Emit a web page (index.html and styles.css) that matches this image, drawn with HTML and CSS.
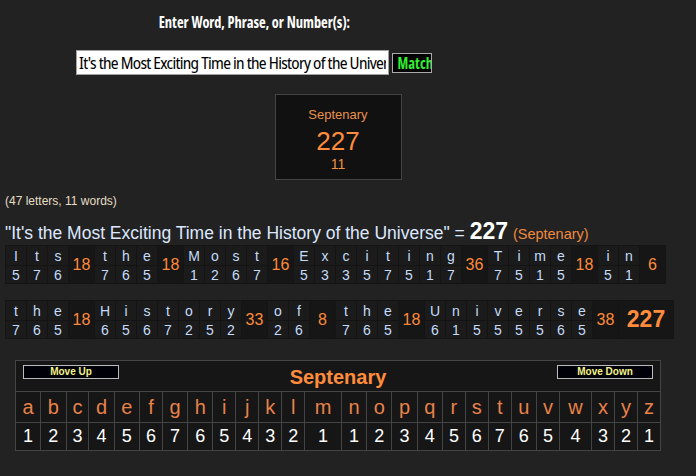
FILE: index.html
```html
<!DOCTYPE html>
<html>
<head>
<meta charset="utf-8">
<link rel="stylesheet" href="styles.css">
</head>
<body>
<div class="page">
  <div class="search">
    <div class="prompt"><span class="squeeze">Enter Word, Phrase, or Number(s):</span></div>
    <form class="search-row">
      <input class="search-input" type="text" value="It's the Most Exciting Time in the History of the Universe">
      <button class="match-btn" type="button"><span class="squeeze">Match</span></button>
    </form>
  </div>

  <div class="result-box">
    <div class="rb-name">Septenary</div>
    <div class="rb-value">227</div>
    <div class="rb-words">11</div>
  </div>

  <div class="counts">(47 letters, 11 words)</div>
  <div class="phrase">"It's the Most Exciting Time in the History of the Universe" = <b class="phrase-total">227</b> <span class="phrase-cipher">(Septenary)</span></div>

  <table class="breakdown">
    <tr>
      <td class="l">I</td><td class="l">t</td><td class="l">s</td><td class="s" rowspan="2">18</td>
      <td class="l">t</td><td class="l">h</td><td class="l">e</td><td class="s" rowspan="2">18</td>
      <td class="l">M</td><td class="l">o</td><td class="l">s</td><td class="l">t</td><td class="s" rowspan="2">16</td>
      <td class="l">E</td><td class="l">x</td><td class="l">c</td><td class="l">i</td><td class="l">t</td><td class="l">i</td><td class="l">n</td><td class="l">g</td><td class="s" rowspan="2">36</td>
      <td class="l">T</td><td class="l">i</td><td class="l">m</td><td class="l">e</td><td class="s" rowspan="2">18</td>
      <td class="l">i</td><td class="l">n</td><td class="s" rowspan="2">6</td>
    </tr>
    <tr>
      <td class="d">5</td><td class="d">7</td><td class="d">6</td>
      <td class="d">7</td><td class="d">6</td><td class="d">5</td>
      <td class="d">1</td><td class="d">2</td><td class="d">6</td><td class="d">7</td>
      <td class="d">5</td><td class="d">3</td><td class="d">3</td><td class="d">5</td><td class="d">7</td><td class="d">5</td><td class="d">1</td><td class="d">7</td>
      <td class="d">7</td><td class="d">5</td><td class="d">1</td><td class="d">5</td>
      <td class="d">5</td><td class="d">1</td>
    </tr>
  </table>

  <table class="breakdown">
    <tr>
      <td class="l">t</td><td class="l">h</td><td class="l">e</td><td class="s" rowspan="2">18</td>
      <td class="l">H</td><td class="l">i</td><td class="l">s</td><td class="l">t</td><td class="l">o</td><td class="l">r</td><td class="l">y</td><td class="s" rowspan="2">33</td>
      <td class="l">o</td><td class="l">f</td><td class="s" rowspan="2">8</td>
      <td class="l">t</td><td class="l">h</td><td class="l">e</td><td class="s" rowspan="2">18</td>
      <td class="l">U</td><td class="l">n</td><td class="l">i</td><td class="l">v</td><td class="l">e</td><td class="l">r</td><td class="l">s</td><td class="l">e</td><td class="s" rowspan="2">38</td>
      <td class="total" rowspan="2">227</td>
    </tr>
    <tr>
      <td class="d">7</td><td class="d">6</td><td class="d">5</td>
      <td class="d">6</td><td class="d">5</td><td class="d">6</td><td class="d">7</td><td class="d">2</td><td class="d">5</td><td class="d">2</td>
      <td class="d">2</td><td class="d">6</td>
      <td class="d">7</td><td class="d">6</td><td class="d">5</td>
      <td class="d">6</td><td class="d">1</td><td class="d">5</td><td class="d">5</td><td class="d">5</td><td class="d">5</td><td class="d">6</td><td class="d">5</td>
    </tr>
  </table>

  <table class="cipher">
    <tr>
      <td class="cipher-head-cell" colspan="26">
        <div class="cipher-head">
          <button class="move-btn" type="button">Move Up</button>
          <span class="cipher-title">Septenary</span>
          <button class="move-btn" type="button">Move Down</button>
        </div>
      </td>
    </tr>
    <tr class="cipher-letters">
      <td>a</td><td>b</td><td>c</td><td>d</td><td>e</td><td>f</td><td>g</td><td>h</td><td>i</td><td>j</td><td>k</td><td>l</td><td>m</td><td>n</td><td>o</td><td>p</td><td>q</td><td>r</td><td>s</td><td>t</td><td>u</td><td>v</td><td>w</td><td>x</td><td>y</td><td>z</td>
    </tr>
    <tr class="cipher-values">
      <td>1</td><td>2</td><td>3</td><td>4</td><td>5</td><td>6</td><td>7</td><td>6</td><td>5</td><td>4</td><td>3</td><td>2</td><td>1</td><td>1</td><td>2</td><td>3</td><td>4</td><td>5</td><td>6</td><td>7</td><td>6</td><td>5</td><td>4</td><td>3</td><td>2</td><td>1</td>
    </tr>
  </table>
</div>
</body>
</html>
```

FILE: styles.css
```css
html, body {
  margin: 0;
  padding: 0;
  background: #222222;
}

body {
  font-family: "Liberation Sans", Arial, sans-serif;
  color: #ffffff;
}

.page {
  width: 676px;
}

.search {
  width: 508px;
  text-align: center;
  padding-top: 12px;
}

.prompt,
.search-input,
.match-btn {
  font-family: "Noto Sans Display", "Roboto Condensed", sans-serif;
  font-stretch: condensed;
}

.squeeze {
  display: inline-block;
  transform: scaleX(0.795);
}

.prompt {
  font-weight: bold;
  font-size: 16px;
  line-height: 20px;
  color: #ffffff;
}

.search-row {
  margin: 18px 0 0;
  display: flex;
  justify-content: center;
  align-items: center;
  gap: 3px;
}

.search-input {
  box-sizing: border-box;
  width: 313px;
  height: 25px;
  margin: 0;
  padding: 0 2px;
  border: 1px solid #a0a0a0;
  background: #ffffff;
  color: #000000;
  font-size: 16px;
  letter-spacing: -0.7px;
}

.match-btn {
  box-sizing: border-box;
  width: 40px;
  height: 20px;
  margin: 0;
  padding: 0;
  border: 1px solid #aaaaaa;
  background: #000000;
  color: #33ee33;
  font-weight: bold;
  font-size: 16px;
  line-height: 18px;
  overflow: hidden;
  white-space: nowrap;
}

.result-box {
  box-sizing: border-box;
  width: 127px;
  margin: 19px auto 0;
  border: 1px solid #454545;
  background: #111111;
  text-align: center;
  padding: 12px 0 7px;
}

.rb-name {
  font-size: 13px;
  line-height: 16px;
  color: #e8904a;
}

.rb-value {
  margin-top: 3px;
  font-size: 26px;
  line-height: 30px;
  color: #ff8c3c;
}

.rb-words {
  font-size: 14px;
  line-height: 16px;
  color: #f09040;
}

.counts {
  margin: 14px 0 0 5px;
  font-size: 12px;
  line-height: 14px;
  color: #e4dfc4;
}

.phrase {
  margin: 12px 0 0 5px;
  font-size: 17.5px;
  line-height: 22px;
  color: #dde8ff;
}

.phrase-total {
  font-size: 23px;
  color: #ffffff;
}

.phrase-cipher {
  font-size: 14.5px;
  color: #f08a40;
}

.breakdown {
  margin: 0 0 0 5px;
  border-collapse: separate;
  border-spacing: 1px;
  background: #141414;
}

.breakdown + .breakdown {
  margin-top: 16px;
}

.breakdown td {
  padding: 0;
  text-align: center;
  background: #1b1b1b;
  color: #c4dcfa;
  font-size: 14px;
}

.breakdown .l {
  width: 20px;
  height: 19px;
}

.breakdown .d {
  height: 17px;
}

.breakdown .s {
  width: 25px;
  background: #161616;
  color: #ff8a3a;
  font-size: 16px;
}

.breakdown .total {
  width: 54px;
  background: #161616;
  color: #ff8c3c;
  font-size: 23px;
  font-weight: bold;
}

.cipher {
  width: 646px;
  margin: 21px 0 0 15px;
  border-collapse: collapse;
  background: #161616;
}

.cipher td {
  border: 1px solid #444444;
  padding: 0;
  text-align: center;
}

.cipher-head-cell {
  height: 30px;
  vertical-align: top;
}

.cipher-head {
  display: flex;
  justify-content: space-between;
  align-items: flex-start;
  padding: 4px 7px 0;
}

.move-btn {
  box-sizing: border-box;
  width: 96px;
  height: 14px;
  margin: 0;
  padding: 0;
  border: 1px solid #bbbbbb;
  background: #000008;
  color: #f4f48a;
  font-family: "Liberation Sans", Arial, sans-serif;
  font-weight: bold;
  font-size: 10px;
  line-height: 12px;
}

.cipher-title {
  font-size: 20px;
  font-weight: bold;
  line-height: 24px;
  color: #ff8c3c;
}

.cipher-letters td {
  height: 30px;
  font-size: 20px;
  color: #e8824a;
}

.cipher-values td {
  height: 27px;
  font-size: 18px;
  color: #ffffff;
}
```
